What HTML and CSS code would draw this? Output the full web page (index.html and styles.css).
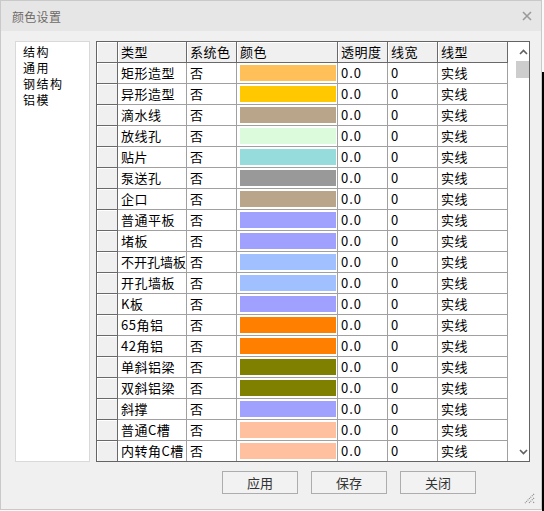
FILE: index.html
```html
<!DOCTYPE html>
<html lang="zh-CN">

<head>
    <meta charset="UTF-8">
    <title>颜色设置</title>
    <link rel="stylesheet" href="styles.css">
</head>

<body>
    <div class="dialog">
        <div class="titlebar">
            <span class="title">颜色设置</span>
            <svg class="close" width="10" height="10" viewBox="0 0 10 10">
                <path d="M1 1 L9 9 M9 1 L1 9" stroke="#9a9a9a" stroke-width="1.6" />
            </svg>
        </div>

        <div class="body">
            <div class="main">
                <ul class="tree">
                    <li>结构</li>
                    <li>通用</li>
                    <li>钢结构</li>
                    <li>铝模</li>
                </ul>

                <div class="grid">
                    <div class="sheet">
                        <div class="row head">
                            <div class="cell rh"></div>
                            <div class="cell">类型</div>
                            <div class="cell">系统色</div>
                            <div class="cell">颜色</div>
                            <div class="cell">透明度</div>
                            <div class="cell">线宽</div>
                            <div class="cell">线型</div>
                        </div>
                        <!-- rows -->
                        <div class="row"><div class="cell rh"></div><div class="cell">矩形造型</div><div class="cell">否</div><div class="cell"><span class="swatch" style="background:#ffc05a"></span></div><div class="cell num">0.0</div><div class="cell num">0</div><div class="cell">实线</div></div>
                        <div class="row"><div class="cell rh"></div><div class="cell">异形造型</div><div class="cell">否</div><div class="cell"><span class="swatch" style="background:#ffc800"></span></div><div class="cell num">0.0</div><div class="cell num">0</div><div class="cell">实线</div></div>
                        <div class="row"><div class="cell rh"></div><div class="cell">滴水线</div><div class="cell">否</div><div class="cell"><span class="swatch" style="background:#b9a58a"></span></div><div class="cell num">0.0</div><div class="cell num">0</div><div class="cell">实线</div></div>
                        <div class="row"><div class="cell rh"></div><div class="cell">放线孔</div><div class="cell">否</div><div class="cell"><span class="swatch" style="background:#dcfadc"></span></div><div class="cell num">0.0</div><div class="cell num">0</div><div class="cell">实线</div></div>
                        <div class="row"><div class="cell rh"></div><div class="cell">贴片</div><div class="cell">否</div><div class="cell"><span class="swatch" style="background:#96dcdc"></span></div><div class="cell num">0.0</div><div class="cell num">0</div><div class="cell">实线</div></div>
                        <div class="row"><div class="cell rh"></div><div class="cell">泵送孔</div><div class="cell">否</div><div class="cell"><span class="swatch" style="background:#999999"></span></div><div class="cell num">0.0</div><div class="cell num">0</div><div class="cell">实线</div></div>
                        <div class="row"><div class="cell rh"></div><div class="cell">企口</div><div class="cell">否</div><div class="cell"><span class="swatch" style="background:#b9a58a"></span></div><div class="cell num">0.0</div><div class="cell num">0</div><div class="cell">实线</div></div>
                        <div class="row"><div class="cell rh"></div><div class="cell">普通平板</div><div class="cell">否</div><div class="cell"><span class="swatch" style="background:#a0a0ff"></span></div><div class="cell num">0.0</div><div class="cell num">0</div><div class="cell">实线</div></div>
                        <div class="row"><div class="cell rh"></div><div class="cell">堵板</div><div class="cell">否</div><div class="cell"><span class="swatch" style="background:#a0a0ff"></span></div><div class="cell num">0.0</div><div class="cell num">0</div><div class="cell">实线</div></div>
                        <div class="row"><div class="cell rh"></div><div class="cell tight">不开孔墙板</div><div class="cell">否</div><div class="cell"><span class="swatch" style="background:#a0c0ff"></span></div><div class="cell num">0.0</div><div class="cell num">0</div><div class="cell">实线</div></div>
                        <div class="row"><div class="cell rh"></div><div class="cell">开孔墙板</div><div class="cell">否</div><div class="cell"><span class="swatch" style="background:#a0c0ff"></span></div><div class="cell num">0.0</div><div class="cell num">0</div><div class="cell">实线</div></div>
                        <div class="row"><div class="cell rh"></div><div class="cell">K板</div><div class="cell">否</div><div class="cell"><span class="swatch" style="background:#a0a0ff"></span></div><div class="cell num">0.0</div><div class="cell num">0</div><div class="cell">实线</div></div>
                        <div class="row"><div class="cell rh"></div><div class="cell">65角铝</div><div class="cell">否</div><div class="cell"><span class="swatch" style="background:#ff8000"></span></div><div class="cell num">0.0</div><div class="cell num">0</div><div class="cell">实线</div></div>
                        <div class="row"><div class="cell rh"></div><div class="cell">42角铝</div><div class="cell">否</div><div class="cell"><span class="swatch" style="background:#ff8000"></span></div><div class="cell num">0.0</div><div class="cell num">0</div><div class="cell">实线</div></div>
                        <div class="row"><div class="cell rh"></div><div class="cell">单斜铝梁</div><div class="cell">否</div><div class="cell"><span class="swatch" style="background:#808000"></span></div><div class="cell num">0.0</div><div class="cell num">0</div><div class="cell">实线</div></div>
                        <div class="row"><div class="cell rh"></div><div class="cell">双斜铝梁</div><div class="cell">否</div><div class="cell"><span class="swatch" style="background:#808000"></span></div><div class="cell num">0.0</div><div class="cell num">0</div><div class="cell">实线</div></div>
                        <div class="row"><div class="cell rh"></div><div class="cell">斜撑</div><div class="cell">否</div><div class="cell"><span class="swatch" style="background:#a0a0ff"></span></div><div class="cell num">0.0</div><div class="cell num">0</div><div class="cell">实线</div></div>
                        <div class="row"><div class="cell rh"></div><div class="cell">普通C槽</div><div class="cell">否</div><div class="cell"><span class="swatch" style="background:#ffc0a0"></span></div><div class="cell num">0.0</div><div class="cell num">0</div><div class="cell">实线</div></div>
                        <div class="row"><div class="cell rh"></div><div class="cell">内转角C槽</div><div class="cell">否</div><div class="cell"><span class="swatch" style="background:#ffc0a0"></span></div><div class="cell num">0.0</div><div class="cell num">0</div><div class="cell">实线</div></div>
                    </div>

                    <div class="vscroll">
                        <svg class="arrow" width="9" height="6" viewBox="0 0 9 6">
                            <path d="M1 5 L4.5 1.5 L8 5" fill="none" stroke="#606060" stroke-width="1.6" />
                        </svg>
                        <span class="thumb"></span>
                        <span class="track"></span>
                        <svg class="arrow" width="9" height="6" viewBox="0 0 9 6">
                            <path d="M1 1 L4.5 4.5 L8 1" fill="none" stroke="#606060" stroke-width="1.6" />
                        </svg>
                    </div>
                </div>
            </div>

            <div class="buttons">
                <button>应用</button>
                <button>保存</button>
                <button>关闭</button>
            </div>

            <svg class="grip" width="12" height="12" viewBox="0 0 12 12">
                <path d="M11 2 L2 11 M11 6 L6 11 M11 10 L10 11" stroke="#8a8a8a" stroke-width="1.2" stroke-dasharray="1 1" />
            </svg>
        </div>
    </div>
</body>

</html>
```

FILE: styles.css
```css
html {
    background:
        linear-gradient(#000, #000) right 0 top 72px / 2px 439px no-repeat,
        linear-gradient(#000, #000) left 198px bottom 0 / 346px 1px no-repeat,
        #fafafa;
}

body {
    margin: 0;
    font-family: "Noto Sans CJK SC", "Liberation Sans", sans-serif;
    font-size: 13px;
    color: #000;
}

.dialog {
    width: 542px;
    height: 510px;
    box-sizing: border-box;
    border: 1px solid #c9c9c9;
    background-color: #f0f0f0;
    display: flex;
    flex-direction: column;
}

.titlebar {
    height: 30px;
    background-color: #e6e6e6;
    display: flex;
    align-items: center;
    justify-content: space-between;
    padding: 0 9px 0 11px;
}

.title {
    font-size: 12px;
    color: #6e6a66;
    letter-spacing: 0.3px;
}

.body {
    flex: 1;
    position: relative;
    padding: 10px 0 0 14px;
}

.main {
    display: flex;
    gap: 6px;
    height: 421px;
}

.tree {
    width: 75px;
    box-sizing: border-box;
    margin: 0;
    padding: 2px 0 0 7px;
    list-style: none;
    background-color: #fff;
    border: 1px solid #d9d9d9;
    font-size: 12px;
    line-height: 16px;
    letter-spacing: 1.5px;
}

.grid {
    width: 434px;
    box-sizing: border-box;
    border: 1px solid #646464;
    background-color: #fff;
    display: flex;
    overflow: hidden;
}

.sheet {
    width: 411px;
}

.row {
    display: grid;
    grid-template-columns: 21px 69px 50px 101px 50px 50px 70px;
    height: 21px;
}

.cell {
    box-sizing: border-box;
    border-right: 1px solid #a0a0a0;
    border-bottom: 1px solid #a0a0a0;
    padding: 0 0 0 3px;
    line-height: 20px;
    white-space: nowrap;
    overflow: hidden;
    letter-spacing: 0.5px;
}

.cell.tight {
    letter-spacing: 0;
}

.cell.num {
    letter-spacing: 1px;
}

.head .cell,
.cell.rh {
    background-color: #f0f0f0;
    border-right-color: #696969;
    border-bottom-color: #696969;
    box-shadow: inset 1px 1px 0 #fff;
}

.swatch {
    display: block;
    margin: 2px 0 0 0;
    width: 96px;
    height: 16px;
}

.vscroll {
    width: 21px;
    box-sizing: border-box;
    padding-left: 5px;
    display: flex;
    flex-direction: column;
    align-items: center;
}

.vscroll .arrow {
    margin: 7px 0 6px 5px;
    flex: none;
}

.thumb {
    width: 16px;
    margin-left: 5px;
    height: 17px;
    background-color: #cdcdcd;
}

.track {
    flex: 1;
}

.buttons {
    display: flex;
    gap: 13px;
    margin-top: 9px;
    padding-left: 207px;
}

.buttons button {
    width: 76px;
    height: 23px;
    background-color: #f2f2f2;
    border: 1px solid #adadad;
    border-radius: 0;
    font-family: "Noto Sans CJK SC", "Liberation Sans", sans-serif;
    font-size: 13px;
    color: #333;
    padding: 0;
}

.grip {
    position: absolute;
    right: 6px;
    bottom: 5px;
}
```
